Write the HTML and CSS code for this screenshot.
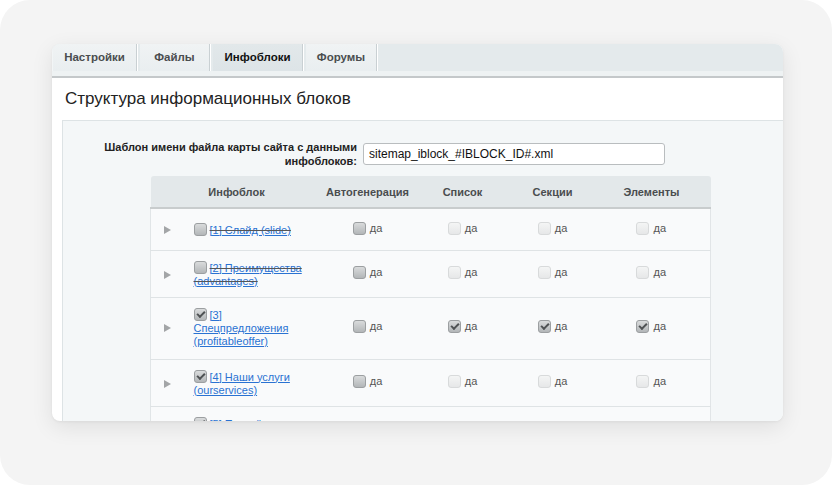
FILE: index.html
```html
<!DOCTYPE html>
<html lang="ru">
<head>
<meta charset="utf-8">
<title>Структура информационных блоков</title>
<link rel="stylesheet" href="styles.css">
</head>
<body>
<div class="frame">
  <div class="card">
    <div class="tabs">
      <div class="tab">Настройки</div>
      <div class="tab">Файлы</div>
      <div class="tab active">Инфоблоки</div>
      <div class="tab">Форумы</div>
    </div>
    <div class="tabs-band"></div>
    <div class="title">Структура информационных блоков</div>
    <div class="panel">
      <div class="form-row">
        <div class="form-label">Шаблон имени файла карты сайта с данными инфоблоков:</div>
        <div class="input">sitemap_iblock_#IBLOCK_ID#.xml</div>
      </div>
      <table class="grid">
        <colgroup>
          <col class="c-arrow"><col class="c-name"><col class="c-auto"><col class="c-list"><col class="c-sect"><col class="c-elem">
        </colgroup>
        <thead>
          <tr>
            <th colspan="2">Инфоблок</th>
            <th>Автогенерация</th>
            <th>Список</th>
            <th>Секции</th>
            <th>Элементы</th>
          </tr>
        </thead>
        <tbody>
          <tr>
            <td class="arrow-cell"><span class="arrow"></span></td>
            <td class="name"><span class="cb"></span> <span class="del"><a href="#">[1] Слайд (slide)</a></span></td>
            <td><span class="opt"><span class="cb"></span>да</span></td>
            <td><span class="opt"><span class="cb dis"></span>да</span></td>
            <td><span class="opt"><span class="cb dis"></span>да</span></td>
            <td><span class="opt"><span class="cb dis"></span>да</span></td>
          </tr>
          <tr>
            <td class="arrow-cell"><span class="arrow"></span></td>
            <td class="name"><span class="cb"></span> <span class="del"><a href="#">[2] Преимущества (advantages)</a></span></td>
            <td><span class="opt"><span class="cb"></span>да</span></td>
            <td><span class="opt"><span class="cb dis"></span>да</span></td>
            <td><span class="opt"><span class="cb dis"></span>да</span></td>
            <td><span class="opt"><span class="cb dis"></span>да</span></td>
          </tr>
          <tr class="tall">
            <td class="arrow-cell"><span class="arrow"></span></td>
            <td class="name"><span class="cb on"></span> <a href="#">[3] Спецпредложения (profitableoffer)</a></td>
            <td><span class="opt"><span class="cb"></span>да</span></td>
            <td><span class="opt"><span class="cb on"></span>да</span></td>
            <td><span class="opt"><span class="cb on"></span>да</span></td>
            <td><span class="opt"><span class="cb on"></span>да</span></td>
          </tr>
          <tr>
            <td class="arrow-cell"><span class="arrow"></span></td>
            <td class="name"><span class="cb on"></span> <a href="#">[4] Наши услуги (ourservices)</a></td>
            <td><span class="opt"><span class="cb"></span>да</span></td>
            <td><span class="opt"><span class="cb dis"></span>да</span></td>
            <td><span class="opt"><span class="cb dis"></span>да</span></td>
            <td><span class="opt"><span class="cb dis"></span>да</span></td>
          </tr>
          <tr>
            <td class="arrow-cell"><span class="arrow"></span></td>
            <td class="name"><span class="cb on"></span> <a href="#">[5] Партнёры компании (partnerscompany)</a></td>
            <td><span class="opt"><span class="cb"></span>да</span></td>
            <td><span class="opt"><span class="cb dis"></span>да</span></td>
            <td><span class="opt"><span class="cb dis"></span>да</span></td>
            <td><span class="opt"><span class="cb dis"></span>да</span></td>
          </tr>
        </tbody>
      </table>
    </div>
  </div>
</div>
</body>
</html>
```
FILE: styles.css
```css
* { box-sizing: border-box; }
html, body { margin: 0; padding: 0; background: #ffffff; }
body { font-family: "Liberation Sans", Arial, sans-serif; color: #333; }

.frame {
  width: 832px;
  height: 485px;
  background: #f4f4f4;
  border-radius: 30px;
  padding: 44px 49px 0 52px;
  overflow: hidden;
}

.card {
  width: 731px;
  height: 377px;
  background: #ffffff;
  border-radius: 8px;
  overflow: hidden;
  box-shadow: 0 6px 22px rgba(0, 0, 0, 0.09), 0 1px 3px rgba(0, 0, 0, 0.05);
  display: flex;
  flex-direction: column;
}

.tabs {
  display: grid;
  grid-template-columns: 84px 70px 90px 71px;
  column-gap: 3px;
  height: 27px;
  background: #e4eaec;
  border-left: 1px solid #f2f5f6;
  flex: none;
}
.tab {
  height: 27px;
  line-height: 27px;
  text-align: center;
  font-size: 11.5px;
  font-weight: bold;
  color: #4a4d4f;
  background: linear-gradient(#f0f3f4, #e9eef0);
  border-right: 1px solid #c9d0d3;
  box-shadow: 1px 0 0 #ffffff;
}
.tab.active {
  color: #111;
  background: linear-gradient(#e2e8ea, #dde4e7);
}
.tabs-band {
  height: 7px;
  background: #eef2f3;
  border-bottom: 2px solid #c4c8ca;
  flex: none;
}

.title {
  height: 42px;
  line-height: 42px;
  padding-left: 13px;
  font-size: 17px;
  color: #222;
  flex: none;
}

.panel {
  flex: 1;
  margin-left: 10px;
  background: #f4f7f8;
  border-top: 1px solid #dde3e5;
  border-left: 1px solid #dde3e5;
  padding-top: 19px;
}

.form-row {
  display: flex;
  align-items: center;
  gap: 6px;
}
.form-label {
  width: 294px;
  text-align: right;
  font-size: 11px;
  font-weight: bold;
  line-height: 14px;
  color: #222;
}
.input {
  width: 302px;
  height: 22px;
  line-height: 20px;
  padding: 0 5px;
  font-size: 12px;
  color: #111;
  background: #fff;
  border: 1px solid #b9bdbf;
  border-radius: 3px;
}

.grid {
  margin: 8px 0 0 87px;
  width: 560px;
  table-layout: fixed;
  border-collapse: collapse;
  font-size: 11px;
}
.c-arrow { width: 35px; }
.c-name { width: 137px; }
.c-auto { width: 90px; }
.c-list { width: 100px; }
.c-sect { width: 80px; }
.c-elem { width: 118px; }

.grid th {
  height: 32px;
  background: #e3e8ea;
  border-bottom: 2px solid #c8cccd;
  font-weight: bold;
  color: #4a4d4f;
  text-align: center;
  padding: 0;
}
.grid th:first-child { border-top-left-radius: 3px; }
.grid th:last-child { border-top-right-radius: 3px; }

.grid td {
  background: #f9fafb;
  border-bottom: 1px solid #dfe3e5;
  padding: 10px 0 9px;
  height: 42px;
  text-align: center;
  vertical-align: middle;
  line-height: 13px;
}
.grid tr.tall td { padding-bottom: 11px; }
.grid tr td:first-child { border-left: 1px solid #e1e5e7; }
.grid tr td:last-child { border-right: 1px solid #e1e5e7; }

.grid td.arrow-cell { text-align: left; padding-left: 13px; }
.grid td.name { text-align: left; padding-left: 8px; padding-right: 12px; }

.arrow {
  display: inline-block;
  width: 0;
  height: 0;
  border-left: 7px solid #a3a5a7;
  border-top: 4px solid transparent;
  border-bottom: 4px solid transparent;
  vertical-align: middle;
}

.name a { color: #2a72d2; text-decoration: underline; }
.del { text-decoration: line-through; color: #555; }

.opt {
  display: inline-flex;
  align-items: center;
  gap: 4px;
  color: #555;
  font-size: 11px;
}

.cb {
  display: inline-block;
  position: relative;
  width: 13px;
  height: 13px;
  border-radius: 3px;
  border: 1px solid #9c9fa1;
  background: linear-gradient(#d9dbdc, #b3b6b8);
  vertical-align: -2px;
}
.cb.dis {
  border-color: #d8dadb;
  background: linear-gradient(#f4f5f5, #e6e7e8);
}
.cb.on::after {
  content: "";
  position: absolute;
  left: 2px;
  top: 2px;
  width: 6px;
  height: 3px;
  border-left: 2px solid #4f5254;
  border-bottom: 2px solid #4f5254;
  transform: rotate(-45deg);
}
```
